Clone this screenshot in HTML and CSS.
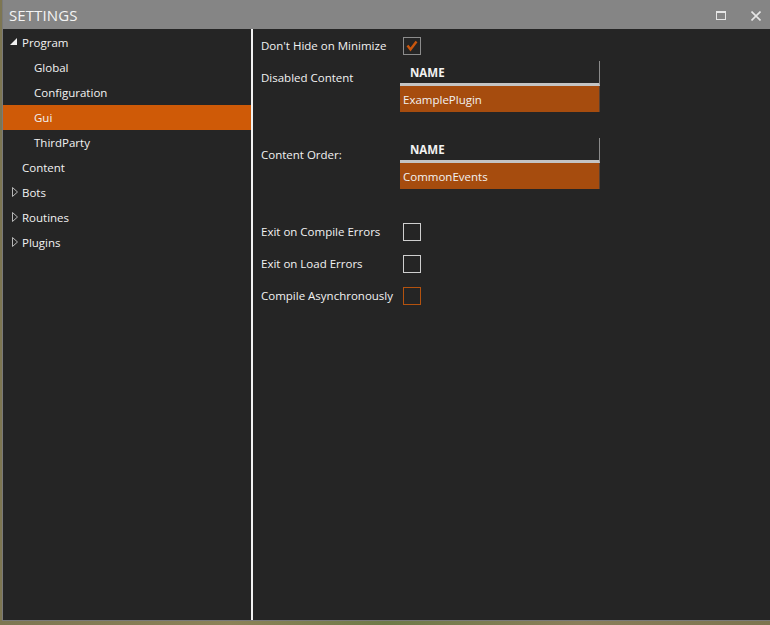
FILE: index.html
```html
<!DOCTYPE html>
<html>
<head>
<meta charset="utf-8">
<link rel="stylesheet" href="styles.css">
</head>
<body>
<div class="window">
  <div class="titlebar">
    <span class="title">SETTINGS</span>
    <div class="tb-buttons">
      <svg class="tb-max" width="10" height="9" viewBox="0 0 10 9"><rect x="0.5" y="0.5" width="9" height="8" fill="none" stroke="#e6e6e6" stroke-width="1"/><rect x="0" y="0" width="10" height="2" fill="#e6e6e6"/></svg>
      <svg class="tb-close" width="10" height="10" viewBox="0 0 10 10"><path d="M0.5 0.5 L9.5 9.5 M9.5 0.5 L0.5 9.5" stroke="#e6e6e6" stroke-width="1.6"/></svg>
    </div>
  </div>
  <div class="main">
    <div class="sidebar">
      <div class="node"><svg class="arrow" width="7" height="7" viewBox="0 0 7 7"><polygon points="7,0 7,7 0,7" fill="#f0f0f0"/></svg><span>Program</span></div>
      <div class="node child">Global</div>
      <div class="node child">Configuration</div>
      <div class="node child selected">Gui</div>
      <div class="node child">ThirdParty</div>
      <div class="node leaf">Content</div>
      <div class="node"><svg class="arrow col" width="6" height="10" viewBox="0 0 6 10"><polygon points="0.5,0.5 5.5,5 0.5,9.5" fill="none" stroke="#b8b8b8" stroke-width="1"/></svg><span>Bots</span></div>
      <div class="node"><svg class="arrow col" width="6" height="10" viewBox="0 0 6 10"><polygon points="0.5,0.5 5.5,5 0.5,9.5" fill="none" stroke="#b8b8b8" stroke-width="1"/></svg><span>Routines</span></div>
      <div class="node"><svg class="arrow col" width="6" height="10" viewBox="0 0 6 10"><polygon points="0.5,0.5 5.5,5 0.5,9.5" fill="none" stroke="#b8b8b8" stroke-width="1"/></svg><span>Plugins</span></div>
    </div>
    <div class="divider"></div>
    <div class="content">
      <div class="row r-hide">
        <div class="label">Don't Hide on Minimize</div>
        <div class="check checked"><svg width="16" height="16" viewBox="0 0 16 16"><path d="M3.5 7.5 L6.5 11.5 L12.5 3.5" fill="none" stroke="#c9560d" stroke-width="2.4"/></svg></div>
      </div>
      <div class="row r-grid1">
        <div class="label glabel">Disabled Content</div>
        <div class="grid">
          <div class="ghead">NAME</div>
          <div class="grow">ExamplePlugin</div>
        </div>
      </div>
      <div class="row r-grid2">
        <div class="label glabel">Content Order:</div>
        <div class="grid">
          <div class="ghead">NAME</div>
          <div class="grow">CommonEvents</div>
        </div>
      </div>
      <div class="row r-c1">
        <div class="label">Exit on Compile Errors</div>
        <div class="check"></div>
      </div>
      <div class="row r-c">
        <div class="label">Exit on Load Errors</div>
        <div class="check"></div>
      </div>
      <div class="row r-c">
        <div class="label">Compile Asynchronously</div>
        <div class="check orange"></div>
      </div>
    </div>
  </div>
</div>
</body>
</html>
```

FILE: styles.css
```css
html, body {
  margin: 0;
  padding: 0;
}
body {
  width: 770px;
  height: 625px;
  overflow: hidden;
  background: linear-gradient(90deg, #7d7652 0%, #8c8258 30%, #6f7a48 50%, #8a7e5a 75%, #7c744f 100%);
  font-family: "Open Sans", "Noto Sans", sans-serif;
  font-size: 11.5px;
  color: #f2f2f2;
}
.window {
  margin-left: 2px;
  width: 768px;
  height: 621px;
  box-sizing: border-box;
  border-left: 1px solid #7a7a7a;
  border-bottom: 1px solid #7a7a7a;
  background: #252525;
  display: flex;
  flex-direction: column;
}
.titlebar {
  height: 29px;
  background: #858585;
  display: flex;
  align-items: center;
  justify-content: space-between;
  flex: none;
}
.title {
  padding-left: 6px;
  font-size: 15px;
  color: #f4f4f4;
  letter-spacing: 0.1px;
}
.tb-buttons {
  display: flex;
  align-items: center;
  gap: 25px;
  padding-right: 9px;
  padding-top: 1px;
}
.tb-close {
  margin-top: 1px;
}
.main {
  flex: 1;
  display: flex;
  min-height: 0;
}
.sidebar {
  width: 248px;
  padding-top: 1px;
  background: #252525;
}
.node {
  height: 25px;
  display: flex;
  align-items: center;
  padding-left: 19px;
  position: relative;
}
.node .arrow {
  position: absolute;
  left: 7px;
  top: 8px;
}
.node .arrow.col {
  left: 9px;
  top: 7px;
}
.node.child {
  padding-left: 31px;
}
.node.selected {
  background: #cf5a07;
}
.divider {
  width: 2px;
  background: #f2f2f2;
  flex: none;
}
.content {
  flex: 1;
  padding-left: 8px;
  padding-top: 8px;
}
.row {
  display: flex;
  align-items: center;
}
.label {
  width: 139px;
  flex: none;
  padding-bottom: 1px;
}
.check {
  width: 18px;
  height: 18px;
  box-sizing: border-box;
  border: 1px solid #cfcfcf;
  margin-left: 3px;
  display: flex;
  align-items: center;
  justify-content: center;
}
.check.checked {
  border-color: #8c8c8c;
}
.check.orange {
  border-color: #b4520e;
}
.r-hide {
  height: 18px;
}
.r-grid1 {
  align-items: flex-start;
  margin-top: 6px;
}
.r-grid2 {
  align-items: flex-start;
  margin-top: 26px;
}
.glabel {
  padding-top: 9px;
}
.grid {
  width: 200px;
}
.ghead {
  height: 20px;
  line-height: 20px;
  padding-top: 2px;
  padding-left: 10px;
  font-weight: bold;
  border-right: 1px solid #8a8a8a;
  border-bottom: 3px solid #c4c4c4;
  margin-right: 1px;
  width: 189px;
}
.grow {
  height: 24px;
  line-height: 24px;
  padding-top: 2px;
  padding-left: 3px;
  background: #a64c0e;
  border-right: 1px solid #5a4030;
}
.r-c1 {
  margin-top: 34px;
  height: 18px;
}
.r-c {
  margin-top: 14px;
  height: 18px;
}
```
